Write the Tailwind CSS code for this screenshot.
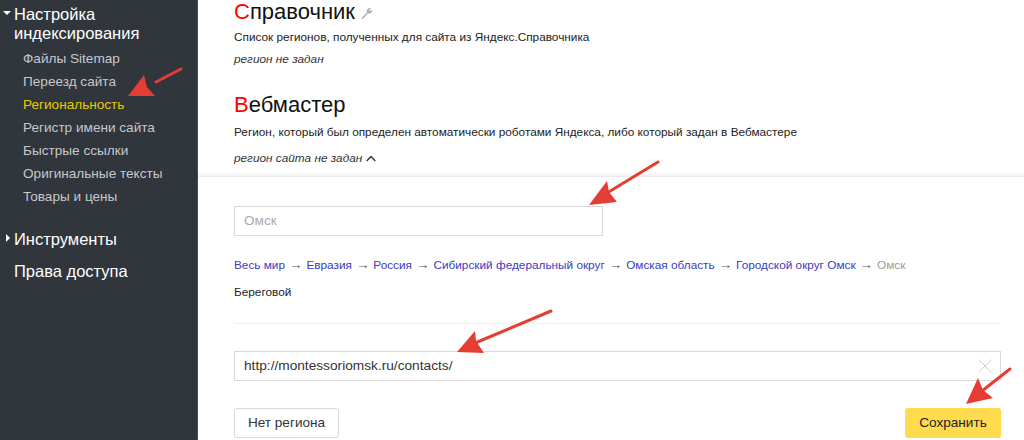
<!DOCTYPE html>
<html lang="ru">
<head>
	<meta charset="UTF-8">
	<title>Региональность</title>
	<script src="https://cdn.jsdelivr.net/npm/@tailwindcss/browser@4"></script>
</head>
<body class="relative w-[1024px] h-[440px] overflow-hidden bg-white font-['Liberation_Sans',Arial,sans-serif]">
	<div class="flex h-full">
		<!-- Sidebar -->
		<aside class="w-[198px] h-full shrink-0 bg-[#31353c] border-r border-[#4a4d52] pt-[5px]">
			<div class="relative pl-[14px] text-[16.5px] leading-[19px] text-white">
				<span class="absolute left-[3px] top-[6px] w-0 h-0 border-x-[4px] border-x-transparent border-t-[4px] border-t-white"></span>
				Настройка<br>индексирования
			</div>
			<ul class="mt-[4px] pl-[23px] text-[13.6px] leading-[23px] text-[#c6c8cb]">
				<li>Файлы Sitemap</li>
				<li>Переезд сайта</li>
				<li class="text-[#e8cb00]">Региональность</li>
				<li>Регистр имени сайта</li>
				<li>Быстрые ссылки</li>
				<li>Оригинальные тексты</li>
				<li>Товары и цены</li>
			</ul>
			<div class="relative mt-[21px] pl-[14px] text-[16.5px] leading-[20px] text-white">
				<span class="absolute left-[6px] top-[5px] w-0 h-0 border-y-[4px] border-y-transparent border-l-[4px] border-l-white"></span>
				Инструменты
			</div>
			<div class="mt-[12px] pl-[14px] text-[16.5px] leading-[20px] text-white">Права доступа</div>
		</aside>

		<main class="flex-1 min-w-0 flex flex-col">
			<!-- Info blocks -->
			<section class="h-[176px] shrink-0 pl-[36px] pt-[1px] overflow-hidden">
				<h2 class="flex items-center text-[22px] leading-[22px] text-[#111]">
					<span><span class="text-[#f00]">С</span>правочник</span>
					<svg class="ml-[6px] mt-[2px] w-[12px] h-[12px]" viewBox="0 0 14 14" fill="#b0b0b0"><path d="M1 12.5 7 6.2a3.6 3.6 0 0 1 4.8-4.6L9.6 3.8l1 1.2 2.3-2a3.6 3.6 0 0 1-4.9 4.4l-5.4 6.2a1 1 0 0 1-1.6-1.1z"/></svg>
				</h2>
				<p class="mt-[6px] text-[11.8px] leading-[16px] text-[#222]">Список регионов, полученных для сайта из Яндекс.Справочника</p>
				<p class="mt-[6px] text-[11.8px] leading-[16px] italic text-[#333]">регион не задан</p>
				<h2 class="mt-[25px] text-[22px] leading-[26px] text-[#111]"><span class="text-[#f00]">В</span>ебмастер</h2>
				<p class="mt-[6px] text-[11.8px] leading-[16px] text-[#222]">Регион, который был определен автоматически роботами Яндекса, либо который задан в Вебмастере</p>
				<p class="mt-[10px] flex items-center text-[11.8px] leading-[16px] italic text-[#333]">
					регион сайта не задан
					<svg class="ml-[4px] w-[10px] h-[7px]" viewBox="0 0 10 7" fill="none" stroke="#333" stroke-width="1.4"><path d="M.7 6 5 1.5 9.3 6"/></svg>
				</p>
			</section>

			<!-- Region form -->
			<section class="flex-1 border-t border-[#ececec] shadow-[0_-2px_3px_rgba(0,0,0,0.06)] pl-[36px] pr-[23px] pt-[29px]">
				<div class="w-[369px] h-[30px] border border-[#d9d9d9] flex items-center pl-[9px] text-[13.6px] text-[#aaa]">Омск</div>
				<div class="mt-[21px] text-[11.8px] leading-[16px] flex items-center gap-[4px] text-[#555]">
					<a class="text-[#3a3ac4]">Весь мир</a><span class="text-[13.4px]">→</span>
					<a class="text-[#3a3ac4]">Евразия</a><span class="text-[13.4px]">→</span>
					<a class="text-[#3a3ac4]">Россия</a><span class="text-[13.4px]">→</span>
					<a class="text-[#3a3ac4]">Сибирский федеральный округ</a><span class="text-[13.4px]">→</span>
					<a class="text-[#3a3ac4]">Омская область</a><span class="text-[13.4px]">→</span>
					<a class="text-[#3a3ac4]">Городской округ Омск</a><span class="text-[13.4px]">→</span>
					<span class="text-[#999]">Омск</span>
				</div>
				<p class="mt-[11px] text-[11.8px] leading-[16px] text-[#222]">Береговой</p>
				<div class="mt-[23px] border-t border-[#f0f0f0]"></div>
				<div class="mt-[27px] h-[30px] border border-[#d9d9d9] flex items-center justify-between pl-[9px] pr-[8px] text-[13.7px] text-[#333]">
					http://montessoriomsk.ru/contacts/
					<svg class="w-[14px] h-[14px]" viewBox="0 0 14 14" stroke="#ccc" stroke-width="1"><path d="M.5.5l13 13M13.5.5l-13 13"/></svg>
				</div>
				<div class="mt-[27px] flex justify-between items-center">
					<button class="w-[105px] h-[30px] border border-[#d9d9d9] rounded-[3px] bg-white text-[13.6px] text-[#333]">Нет региона</button>
					<button class="w-[96px] h-[30px] rounded-[3px] bg-[#ffdb4d] text-[13.6px] text-[#222]">Сохранить</button>
				</div>
			</section>
		</main>
	</div>

	<!-- Red annotation arrows -->
	<svg class="absolute inset-0 pointer-events-none" width="1024" height="440" viewBox="0 0 1024 440" fill="#e53d33" stroke="none">
		<path d="M128 96 144 75 147 87 155 96z"/><path d="M156 82 181 69" stroke="#e53d33" stroke-width="3" stroke-linecap="round"/>
		<path d="M589 205 607 181 609 192 617 202z"/><path d="M607 193 658 162" stroke="#e53d33" stroke-width="3" stroke-linecap="round"/>
		<path d="M457 352 475 331 476 341 484 353z"/><path d="M475 343 551 311" stroke="#e53d33" stroke-width="3" stroke-linecap="round"/>
		<path d="M966 404 978 378 983 390 993 398z"/><path d="M982 391 1010 369" stroke="#e53d33" stroke-width="3" stroke-linecap="round"/>
	</svg>
</body>
</html>
